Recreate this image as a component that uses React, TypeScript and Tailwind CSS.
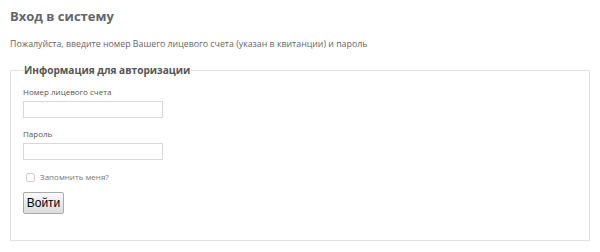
export default function App() {
  return (
    <div className="w-[600px] h-[252px] bg-white px-[10px] pt-[6px] text-[#666]" style={{ fontFamily: '"Open Sans", sans-serif' }}>
      <h1 className="text-[13px] font-bold leading-[20px] text-[#666]">Вход в систему</h1>
      <p className="mt-[12px] text-[8.8px] leading-[13px]">
        Пожалуйста, введите номер Вашего лицевого счета (указан в квитанции) и пароль
      </p>
      <fieldset className="mt-[12px] border border-[#e2e2e2] px-[12px] pb-[26px]">
        <legend className="px-[1px] text-[10.1px] font-bold leading-[14px] text-[#555]">Информация для авторизации</legend>
        <div className="mt-[9px] flex flex-col items-start">
          <label className="text-[8px] leading-[12px] text-[#555]">Номер лицевого счета</label>
          <input type="text" className="mt-[3px] h-[17px] w-[140px] border border-[#d8d8d8] bg-white outline-none" />
          <label className="mt-[10px] text-[8px] leading-[12px] text-[#555]">Пароль</label>
          <input type="password" className="mt-[3px] h-[17px] w-[140px] border border-[#d8d8d8] bg-white outline-none" />
          <label className="mt-[11px] ml-[3px] flex items-center gap-[5px] text-[8px] leading-[12px] text-[#777]">
            <span className="h-[9px] w-[9px] rounded-[2px] border border-[#cfcfcf] bg-white" />
            Запомнить меня?
          </label>
          <button
            className="mt-[9px] h-[22px] w-[41px] rounded-[2px] border border-[#aaa] bg-gradient-to-b from-[#fafafa] to-[#dcdcdc] text-[12px] leading-[20px] text-black"
            style={{ fontFamily: '"Liberation Sans", Arial, sans-serif' }}
          >
            Войти
          </button>
        </div>
      </fieldset>
    </div>
  );
}
